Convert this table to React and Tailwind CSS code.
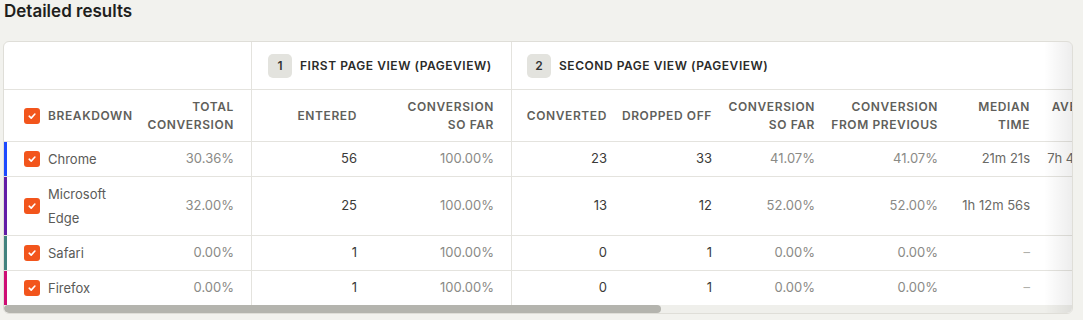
import React from 'react'

const rows = [
  {
    name: 'Chrome',
    stripe: 'bg-[#1d4aff]',
    height: 'h-[35px]',
    total: '30.36%',
    entered: '56',
    soFar: '100.00%',
    converted: '23',
    dropped: '33',
    soFar2: '41.07%',
    fromPrev: '41.07%',
    median: '21m 21s',
    average: '7h 45m 2s',
    border: true,
  },
  {
    name: 'Microsoft Edge',
    stripe: 'bg-[#621da6]',
    height: 'h-[59px]',
    total: '32.00%',
    entered: '25',
    soFar: '100.00%',
    converted: '13',
    dropped: '12',
    soFar2: '52.00%',
    fromPrev: '52.00%',
    median: '1h 12m 56s',
    average: '3m 2s',
    border: true,
  },
  {
    name: 'Safari',
    stripe: 'bg-[#42827e]',
    height: 'h-[35px]',
    total: '0.00%',
    entered: '1',
    soFar: '100.00%',
    converted: '0',
    dropped: '1',
    soFar2: '0.00%',
    fromPrev: '0.00%',
    median: '–',
    average: '–',
    border: true,
  },
  {
    name: 'Firefox',
    stripe: 'bg-[#ce0e74]',
    height: 'h-[34px]',
    total: '0.00%',
    entered: '1',
    soFar: '100.00%',
    converted: '0',
    dropped: '1',
    soFar2: '0.00%',
    fromPrev: '0.00%',
    median: '–',
    average: '–',
    border: false,
  },
]

function Checkbox() {
  return (
    <span className="w-4 h-4 shrink-0 rounded-[3px] bg-[#f2551c] flex items-center justify-center">
      <svg width="10" height="10" viewBox="0 0 10 10" fill="none">
        <path
          d="M2.2 5.2 4.2 7.1 7.9 3"
          stroke="white"
          strokeWidth="1.6"
          strokeLinecap="round"
          strokeLinejoin="round"
        />
      </svg>
    </span>
  )
}

function Head({ className, children }) {
  return (
    <div
      className={`shrink-0 flex items-center justify-end text-right pr-[17px] text-[12px] leading-[18px] font-semibold tracking-[0.05em] text-[#5f5f5b] whitespace-nowrap ${className}`}
    >
      <div>{children}</div>
    </div>
  )
}

function Cell({ className, children }) {
  return (
    <div
      className={`shrink-0 flex items-center justify-end pr-[17px] text-[13px] whitespace-nowrap ${className}`}
    >
      {children}
    </div>
  )
}

function GroupLabel({ num, label }) {
  return (
    <div className="flex items-center gap-2">
      <span className="w-6 h-6 rounded-[5px] bg-[#e3e3de] flex items-center justify-center text-[12px] font-semibold text-[#333]">
        {num}
      </span>
      <span className="text-[12px] font-semibold tracking-[0.045em] text-[#2b2b29] whitespace-nowrap">
        {label}
      </span>
    </div>
  )
}

export default function App() {
  return (
    <div className="w-[1083px] h-[320px] bg-[#f2f2ee] pl-[3px] font-['Inter',sans-serif] overflow-hidden">
      <h2 className="ml-[1px] text-[17px] leading-[22px] font-semibold text-[#1f1f1d]">
        Detailed results
      </h2>

      <div className="relative mt-[19px] w-[1070px] bg-white border border-[#dfded8] rounded-[6px] overflow-hidden">
        {/* Group header row */}
        <div className="flex h-[48px] border-b border-[#e4e3de] w-max">
          <div className="w-[248px] shrink-0 border-r border-[#e4e3de]" />
          <div className="w-[260px] shrink-0 border-r border-[#e4e3de] flex items-center pl-4">
            <GroupLabel num="1" label="FIRST PAGE VIEW (PAGEVIEW)" />
          </div>
          <div className="w-[640px] shrink-0 flex items-center pl-[15px]">
            <GroupLabel num="2" label="SECOND PAGE VIEW (PAGEVIEW)" />
          </div>
        </div>

        {/* Column header row */}
        <div className="flex h-[52px] border-b border-[#e4e3de] w-max">
          <div className="w-[144px] shrink-0 flex items-center gap-2 pl-5">
            <Checkbox />
            <span className="text-[12px] font-semibold tracking-[0.05em] text-[#5f5f5b]">
              BREAKDOWN
            </span>
          </div>
          <Head className="w-[104px] border-r border-[#e4e3de]">
            TOTAL
            <br />
            CONVERSION
          </Head>
          <Head className="w-[122px]">ENTERED</Head>
          <Head className="w-[138px] border-r border-[#e4e3de]">
            CONVERSION
            <br />
            SO FAR
          </Head>
          <Head className="w-[112px]">CONVERTED</Head>
          <Head className="w-[105px]">DROPPED OFF</Head>
          <Head className="w-[103px]">
            CONVERSION
            <br />
            SO FAR
          </Head>
          <Head className="w-[123px]">
            CONVERSION
            <br />
            FROM PREVIOUS
          </Head>
          <Head className="w-[92px]">
            MEDIAN
            <br />
            TIME
          </Head>
          <Head className="w-[82px]">
            AVERAGE
            <br />
            TIME
          </Head>
        </div>

        {/* Data rows */}
        {rows.map(r => (
          <div
            key={r.name}
            className={`flex w-max ${r.height} ${
              r.border ? 'border-b border-[#e4e3de]' : ''
            }`}
          >
            <div className="w-[144px] shrink-0 flex items-stretch">
              <div className={`w-[3px] shrink-0 ${r.stripe}`} />
              <div className="flex items-center gap-2 pl-[17px]">
                <Checkbox />
                <span className="max-w-[72px] text-[13px] leading-[24px] text-[#5a5a57]">
                  {r.name}
                </span>
              </div>
            </div>
            <Cell className="w-[104px] border-r border-[#e4e3de] text-[#8a8a86]">
              {r.total}
            </Cell>
            <Cell className="w-[122px] text-[#3a3a38]">{r.entered}</Cell>
            <Cell className="w-[138px] border-r border-[#e4e3de] text-[#8a8a86]">
              {r.soFar}
            </Cell>
            <Cell className="w-[112px] text-[#3a3a38]">{r.converted}</Cell>
            <Cell className="w-[105px] text-[#3a3a38]">{r.dropped}</Cell>
            <Cell className="w-[103px] text-[#8a8a86]">{r.soFar2}</Cell>
            <Cell className="w-[123px] text-[#8a8a86]">{r.fromPrev}</Cell>
            <Cell
              className={`w-[92px] ${
                r.median === '–' ? 'text-[#b0b0ab]' : 'text-[#6a6a66]'
              }`}
            >
              {r.median}
            </Cell>
            <Cell
              className={`w-[82px] ${
                r.average === '–' ? 'text-[#b0b0ab]' : 'text-[#6a6a66]'
              }`}
            >
              {r.average}
            </Cell>
          </div>
        ))}

        {/* Horizontal scrollbar */}
        <div className="h-[8px] bg-[#efefeb]">
          <div className="w-[657px] h-full rounded-full bg-[#b4b4ae]" />
        </div>

        {/* Scroll shadow on the right edge */}
        <div className="absolute right-0 top-0 bottom-0 w-[28px] bg-gradient-to-l from-black/[0.07] to-transparent pointer-events-none" />
      </div>
    </div>
  )
}
